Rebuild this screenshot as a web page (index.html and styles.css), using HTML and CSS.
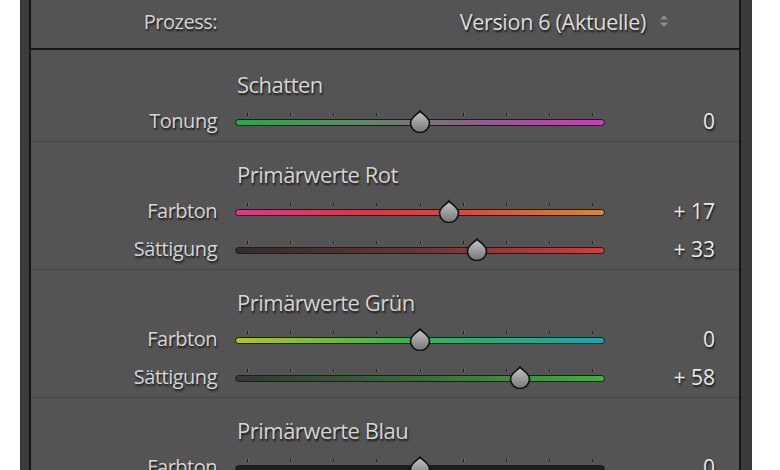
FILE: index.html
```html
<!DOCTYPE html>
<html lang="de">
<head>
    <meta charset="UTF-8">
    <meta name="viewport" content="width=device-width, initial-scale=1.0">
    <title>Farbkalibrierung</title>
    <link rel="stylesheet" href="styles.css">
</head>
<body>
    <div class="frame">
        <div class="panel">
            <div class="process-row">
                <span class="label">Prozess:</span>
                <span class="process-value">
                    Version 6 (Aktuelle)
                    <svg class="updown" viewBox="0 0 10 14">
                        <path d="M5 1 L9 5.5 L1 5.5 Z"></path>
                        <path d="M5 13 L9 8.5 L1 8.5 Z"></path>
                    </svg>
                </span>
            </div>

            <section class="group first">
                <h3>Schatten</h3>
                <div class="row">
                    <span class="label">Tonung</span>
                    <div class="slider">
                        <div class="ticks"><i></i><i></i><i></i><i></i><i></i><i></i><i></i><i></i><i></i></div>
                        <div class="track tonung"></div>
                        <svg class="thumb" style="left: 173px" viewBox="0 0 24 24"><use href="#thumb-shape"></use></svg>
                    </div>
                    <span class="value">0</span>
                </div>
            </section>

            <section class="group">
                <h3>Primärwerte Rot</h3>
                <div class="row">
                    <span class="label">Farbton</span>
                    <div class="slider">
                        <div class="ticks"><i></i><i></i><i></i><i></i><i></i><i></i><i></i><i></i><i></i></div>
                        <div class="track rot-farbton"></div>
                        <svg class="thumb" style="left: 202px" viewBox="0 0 24 24"><use href="#thumb-shape"></use></svg>
                    </div>
                    <span class="value">+ 17</span>
                </div>
                <div class="row">
                    <span class="label">Sättigung</span>
                    <div class="slider">
                        <div class="ticks"><i></i><i></i><i></i><i></i><i></i><i></i><i></i><i></i><i></i></div>
                        <div class="track rot-saettigung"></div>
                        <svg class="thumb" style="left: 230px" viewBox="0 0 24 24"><use href="#thumb-shape"></use></svg>
                    </div>
                    <span class="value">+ 33</span>
                </div>
            </section>

            <section class="group">
                <h3>Primärwerte Grün</h3>
                <div class="row">
                    <span class="label">Farbton</span>
                    <div class="slider">
                        <div class="ticks"><i></i><i></i><i></i><i></i><i></i><i></i><i></i><i></i><i></i></div>
                        <div class="track gruen-farbton"></div>
                        <svg class="thumb" style="left: 173px" viewBox="0 0 24 24"><use href="#thumb-shape"></use></svg>
                    </div>
                    <span class="value">0</span>
                </div>
                <div class="row">
                    <span class="label">Sättigung</span>
                    <div class="slider">
                        <div class="ticks"><i></i><i></i><i></i><i></i><i></i><i></i><i></i><i></i><i></i></div>
                        <div class="track gruen-saettigung"></div>
                        <svg class="thumb" style="left: 273px" viewBox="0 0 24 24"><use href="#thumb-shape"></use></svg>
                    </div>
                    <span class="value">+ 58</span>
                </div>
            </section>

            <section class="group">
                <h3>Primärwerte Blau</h3>
                <div class="row">
                    <span class="label">Farbton</span>
                    <div class="slider">
                        <div class="ticks"><i></i><i></i><i></i><i></i><i></i><i></i><i></i><i></i><i></i></div>
                        <div class="track blau-farbton"></div>
                        <svg class="thumb" style="left: 173px" viewBox="0 0 24 24"><use href="#thumb-shape"></use></svg>
                    </div>
                    <span class="value">0</span>
                </div>
            </section>
        </div>
    </div>

    <!-- shared slider thumb -->
    <svg class="defs" width="0" height="0">
        <defs>
            <linearGradient id="thumb-fill" x1="0" y1="0" x2="0" y2="1">
                <stop offset="0" stop-color="#c6c6c6"></stop>
                <stop offset="1" stop-color="#767676"></stop>
            </linearGradient>
            <path id="thumb-shape" d="M12 2 C13.8 5 21.5 8 21.5 14 A9.5 9.5 0 0 1 2.5 14 C2.5 8 10.2 5 12 2 Z" fill="url(#thumb-fill)" stroke="#111" stroke-width="1.6"></path>
        </defs>
    </svg>
</body>
</html>
```

FILE: styles.css
```css
body {
    margin: 0;
    background-color: #fff;
    font-family: "Open Sans", "Noto Sans", sans-serif;
    overflow: hidden;
}

.frame {
    margin-left: 20px;
    width: 732px;
    height: 470px;
    padding: 0 11px 0 9px;
    box-sizing: border-box;
    background-color: #3b3b3b;
}

.panel {
    height: 100%;
    background-color: #545454;
    border-left: 2px solid #161616;
    border-right: 2px solid #161616;
    color: #d4d4d4;
    text-shadow: 1px 2px 2px rgba(0, 0, 0, 0.7);
}

.label {
    text-align: right;
    font-size: 20px;
    letter-spacing: -0.5px;
}

.row .label {
    padding-bottom: 1px;
}

/* top row */
.process-row {
    height: 50px;
    box-sizing: border-box;
    padding-bottom: 6px;
    border-bottom: 2px solid #161616;
    display: grid;
    grid-template-columns: 186px 1fr;
    column-gap: 18px;
    align-items: center;
}

.process-value {
    display: flex;
    align-items: center;
    justify-content: flex-end;
    padding-right: 70px;
    font-size: 21.5px;
    letter-spacing: -0.3px;
    color: #dcdcdc;
}

.updown {
    width: 10px;
    height: 14px;
    margin-left: 13px;
    fill: #8a8a8a;
}

/* slider groups */
.group {
    padding-top: 19px;
    padding-bottom: 1px;
    border-top: 1px solid #474747;
}

.group.first {
    padding-top: 21px;
    border-top: none;
}

.group h3 {
    margin: 0 0 5px 206px;
    font-size: 22px;
    font-weight: normal;
    letter-spacing: -0.5px;
    line-height: 26px;
    color: #d4d4d4;
}

.row {
    height: 38px;
    display: grid;
    grid-template-columns: 186px 370px 92px;
    column-gap: 18px;
    align-items: center;
}

.value {
    text-align: right;
    font-size: 21px;
    color: #e8e8e8;
}

.slider {
    position: relative;
    height: 38px;
    display: flex;
    flex-direction: column;
    justify-content: center;
    padding-bottom: 3px;
    box-sizing: border-box;
}

.ticks {
    display: flex;
    justify-content: space-between;
    padding: 0 12px;
    margin-bottom: 3px;
}

.ticks i {
    width: 1px;
    height: 3px;
    background-color: #1e1e1e;
    box-shadow: 1px 0 0 rgba(255, 255, 255, 0.1);
}

.track {
    height: 5px;
    border: 1px solid #1c1c1c;
    border-radius: 4px;
}

.thumb {
    position: absolute;
    top: 6.5px;
    width: 24px;
    height: 24px;
}

.tonung {
    background: linear-gradient(to right, #22aa4a, #5f8a66 30%, #777 50%, #8c5e88 65%, #c83fb8);
}

.rot-farbton {
    background: linear-gradient(to right, #d63c8c, #d43a4a 35%, #d24a3c 60%, #d4883a);
}

.rot-saettigung {
    background: linear-gradient(to right, #332c2c, #5e3636 45%, #d43c3c);
}

.gruen-farbton {
    background: linear-gradient(to right, #b6c22c, #3cb24c 45%, #28ac7c 70%, #1ea6ac);
}

.gruen-saettigung {
    background: linear-gradient(to right, #333833, #3c6a3c 50%, #40b040);
}

.blau-farbton {
    background: linear-gradient(to right, #1e1e1e, #1e1e1e);
}

.defs {
    position: absolute;
}
```
